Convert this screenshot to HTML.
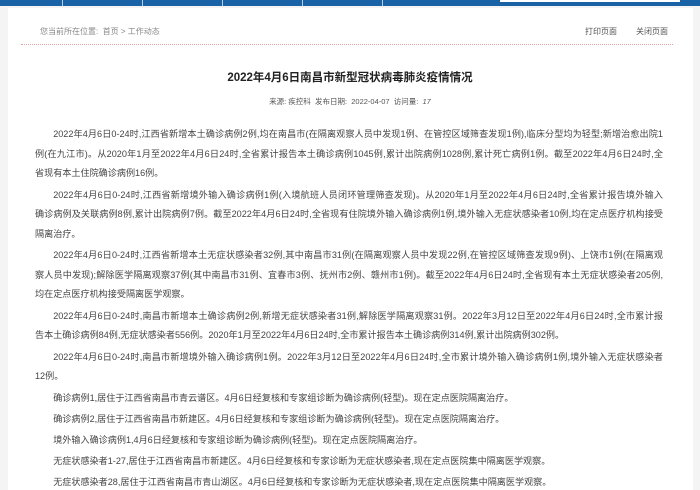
<!DOCTYPE html>
<html><head><meta charset="utf-8"><style>
*{margin:0;padding:0;box-sizing:border-box}
html,body{width:700px;height:490px;overflow:hidden}
body{background:#f4f4f4;font-family:"Liberation Sans","Noto Sans CJK SC",sans-serif;color:#333;position:relative}
.top{position:absolute;left:0;top:0;width:700px;height:6px;background:#1a62a6}
.top i{position:absolute;top:0;width:1px;height:6px;background:#bcd}
.top b{position:absolute;left:500px;top:0;width:180px;height:2px;background:#fff}
.page{position:absolute;left:8px;top:8px;width:685px;height:482px;background:#fff}
.crumb{position:absolute;left:40px;top:26px;font-size:8px;color:#888}
.tools{position:absolute;top:26px;font-size:8px;color:#555}
.line{position:absolute;left:21px;top:44px;width:652px;border-top:1px dotted #e0a0a8}
h1{position:absolute;left:0;width:700px;top:69px;text-align:center;font-size:11.5px;font-weight:bold;color:#222}
.meta{position:absolute;left:0;width:700px;top:96px;text-align:center;font-size:7.5px;color:#555}
.body{position:absolute;left:35px;top:125px;width:628px;font-size:9.1px;line-height:19.6px;color:#444}
.body p{margin-bottom:1.8px}
.body p.s{margin-bottom:1.4px}
.body span{display:block;white-space:nowrap}
.body span.j{text-align:justify;text-align-last:justify;white-space:normal}
.body span.f{text-indent:2em}
</style></head><body>
<div class="top"><i style="left:62px"></i><i style="left:142px"></i><i style="left:222px"></i><i style="left:302px"></i><i style="left:382px"></i><b></b></div>
<div class="page"></div>
<div class="crumb">您当前所在位置:&nbsp; 首页 &gt; 工作动态</div>
<div class="tools" style="left:585px">打印页面</div>
<div class="tools" style="left:636px">关闭页面</div>
<div class="line"></div>
<h1>2022年4月6日南昌市新型冠状病毒肺炎疫情情况</h1>
<div class="meta">来源: 疾控科 &nbsp;发布日期: &nbsp;2022-04-07 &nbsp;访问量: &nbsp;<i>17</i></div>
<div class="body">
<p><span class="f j">2022年4月6日0-24时,江西省新增本土确诊病例2例,均在南昌市(在隔离观察人员中发现1例、在管控区域筛查发现1例),临床分型均为轻型;新增治愈出院1</span><span class="j">例(在九江市)。从2020年1月至2022年4月6日24时,全省累计报告本土确诊病例1045例,累计出院病例1028例,累计死亡病例1例。截至2022年4月6日24时,全</span><span>省现有本土住院确诊病例16例。</span></p>
<p><span class="f j">2022年4月6日0-24时,江西省新增境外输入确诊病例1例(入境航班人员闭环管理筛查发现)。从2020年1月至2022年4月6日24时,全省累计报告境外输入</span><span class="j">确诊病例及关联病例8例,累计出院病例7例。截至2022年4月6日24时,全省现有住院境外输入确诊病例1例,境外输入无症状感染者10例,均在定点医疗机构接受</span><span>隔离治疗。</span></p>
<p><span class="f j">2022年4月6日0-24时,江西省新增本土无症状感染者32例,其中南昌市31例(在隔离观察人员中发现22例,在管控区域筛查发现9例)、上饶市1例(在隔离观</span><span class="j">察人员中发现);解除医学隔离观察37例(其中南昌市31例、宜春市3例、抚州市2例、赣州市1例)。截至2022年4月6日24时,全省现有本土无症状感染者205例,</span><span>均在定点医疗机构接受隔离医学观察。</span></p>
<p><span class="f j">2022年4月6日0-24时,南昌市新增本土确诊病例2例,新增无症状感染者31例,解除医学隔离观察31例。2022年3月12日至2022年4月6日24时,全市累计报</span><span>告本土确诊病例84例,无症状感染者556例。2020年1月至2022年4月6日24时,全市累计报告本土确诊病例314例,累计出院病例302例。</span></p>
<p><span class="f j">2022年4月6日0-24时,南昌市新增境外输入确诊病例1例。2022年3月12日至2022年4月6日24时,全市累计境外输入确诊病例1例,境外输入无症状感染者</span><span>12例。</span></p>
<p class="s"><span class="f">确诊病例1,居住于江西省南昌市青云谱区。4月6日经复核和专家组诊断为确诊病例(轻型)。现在定点医院隔离治疗。</span></p>
<p class="s"><span class="f">确诊病例2,居住于江西省南昌市新建区。4月6日经复核和专家组诊断为确诊病例(轻型)。现在定点医院隔离治疗。</span></p>
<p class="s"><span class="f">境外输入确诊病例1,4月6日经复核和专家组诊断为确诊病例(轻型)。现在定点医院隔离治疗。</span></p>
<p class="s"><span class="f">无症状感染者1-27,居住于江西省南昌市新建区。4月6日经复核和专家诊断为无症状感染者,现在定点医院集中隔离医学观察。</span></p>
<p class="s"><span class="f">无症状感染者28,居住于江西省南昌市青山湖区。4月6日经复核和专家诊断为无症状感染者,现在定点医院集中隔离医学观察。</span></p>
</div>
</body></html>
